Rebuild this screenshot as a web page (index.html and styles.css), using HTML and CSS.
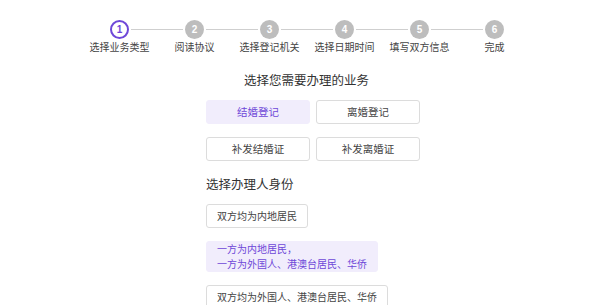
FILE: index.html
```html
<html>
<head>
    <title>业务办理</title>
    <link rel="stylesheet" href="styles.css">
</head>
<body>
    <div class="steps">
        <div class="step active">
            <div class="steptop"><span class="line hide"></span><span class="num">1</span><span class="line"></span></div>
            <div class="steplabel">选择业务类型</div>
        </div>
        <div class="step">
            <div class="steptop"><span class="line"></span><span class="num">2</span><span class="line"></span></div>
            <div class="steplabel">阅读协议</div>
        </div>
        <div class="step">
            <div class="steptop"><span class="line"></span><span class="num">3</span><span class="line"></span></div>
            <div class="steplabel">选择登记机关</div>
        </div>
        <div class="step">
            <div class="steptop"><span class="line"></span><span class="num">4</span><span class="line"></span></div>
            <div class="steplabel">选择日期时间</div>
        </div>
        <div class="step">
            <div class="steptop"><span class="line"></span><span class="num">5</span><span class="line"></span></div>
            <div class="steplabel">填写双方信息</div>
        </div>
        <div class="step">
            <div class="steptop"><span class="line"></span><span class="num">6</span><span class="line hide"></span></div>
            <div class="steplabel">完成</div>
        </div>
    </div>

    <div class="divcontent">
        <h4 class="title">选择您需要办理的业务</h4>
        <div class="btngrid">
            <div class="btnitem selected">结婚登记</div>
            <div class="btnitem">离婚登记</div>
            <div class="btnitem">补发结婚证</div>
            <div class="btnitem">补发离婚证</div>
        </div>

        <h4 class="subtitle">选择办理人身份</h4>
        <div class="optlist">
            <div class="optitem">双方均为内地居民</div>
            <div class="optitem selected multi">一方为内地居民，<br>一方为外国人、港澳台居民、华侨</div>
            <div class="optitem">双方均为外国人、港澳台居民、华侨</div>
        </div>
    </div>
</body>
</html>
```

FILE: styles.css
```css
* {
    margin: 0px;
    padding: 0px;
    box-sizing: border-box;
}

body {
    background: #ffffff;
    font-family: "Noto Sans CJK SC", "Noto Sans", sans-serif;
    color: #444;
    overflow: hidden;
}

.steps {
    display: flex;
    margin-left: 82px;
    padding-top: 20px;
}

.step {
    width: 75px;
    display: flex;
    flex-direction: column;
    align-items: center;
}

.steptop {
    width: 100%;
    display: flex;
    align-items: center;
}

.line {
    flex: 1;
    height: 1px;
    background: #cfcfcf;
}

.line.hide {
    background: transparent;
}

.num {
    width: 19px;
    height: 19px;
    border-radius: 50%;
    margin: 0 2px;
    background: #bdbdbd;
    color: #fff;
    font-size: 10px;
    font-weight: bold;
    line-height: 19px;
    text-align: center;
    font-family: "Liberation Sans", sans-serif;
}

.step.active .num {
    background: #fff;
    border: 2px solid #6e48d8;
    color: #6e48d8;
    line-height: 15px;
}

.steplabel {
    margin-top: 1px;
    font-size: 10px;
    line-height: 14px;
    color: #444;
    white-space: nowrap;
}

.divcontent {
    margin-left: 206px;
    width: 214px;
}

.title {
    margin-top: 17px;
    font-size: 12.5px;
    font-weight: normal;
    line-height: 18px;
    color: #333;
    text-align: center;
    padding-right: 13px;
}

.btngrid {
    display: grid;
    grid-template-columns: 104px 104px;
    column-gap: 6px;
    row-gap: 13px;
    margin-top: 11px;
}

.btnitem {
    height: 24px;
    border: 1px solid #dcdcdc;
    border-radius: 3px;
    font-size: 10.5px;
    line-height: 22px;
    text-align: center;
    color: #444;
}

.btnitem.selected {
    background: #f1edfc;
    border-color: #f1edfc;
    color: #6e48d8;
}

.subtitle {
    margin-top: 14px;
    font-size: 12.5px;
    font-weight: normal;
    line-height: 18px;
    color: #333;
}

.optlist {
    display: flex;
    flex-direction: column;
    align-items: flex-start;
    gap: 13px;
    margin-top: 11px;
}

.optitem {
    height: 24px;
    padding: 0 10px;
    border: 1px solid #dcdcdc;
    border-radius: 3px;
    font-size: 10px;
    line-height: 22px;
    color: #444;
    white-space: nowrap;
}

.optitem.selected {
    background: #f1edfc;
    border-color: #f1edfc;
    color: #6e48d8;
}

.optitem.multi {
    height: auto;
    line-height: 14.5px;
}
```
